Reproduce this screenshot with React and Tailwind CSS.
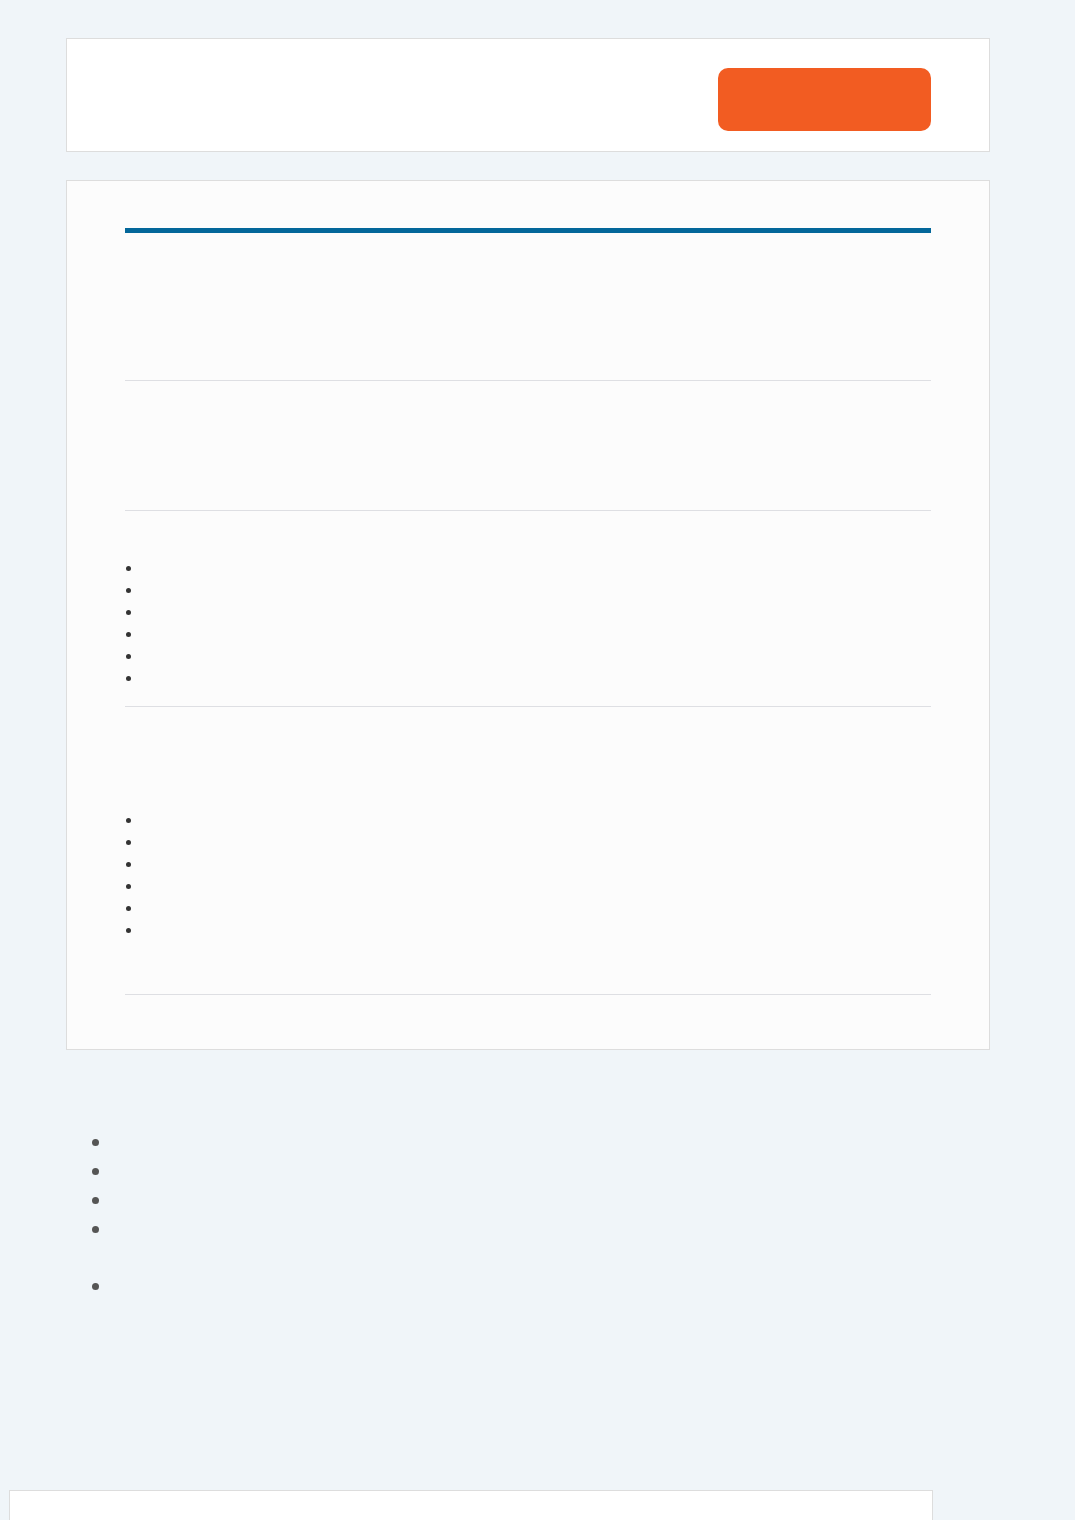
import React from "react";

const Dot = ({ className }) => (
  <span className={`inline-block rounded-full ${className}`} />
);

const CardList = () => (
  <ul className="flex flex-col">
    {[0, 1, 2, 3, 4, 5].map((i) => (
      <li key={i} className="h-[22px] flex items-center pl-[1px]">
        <Dot className="w-[5px] h-[5px] bg-[#333333]" />
      </li>
    ))}
  </ul>
);

const App = () => {
  const outer = [29, 29, 29, 58, 29];

  return (
    <div className="min-h-[1520px] bg-[#f0f5f9] overflow-hidden font-['Liberation_Sans',sans-serif]">
      <div className="ml-[66px] w-[924px] pt-[38px]">
        {/* header card */}
        <div className="h-[114px] bg-white border border-[#dddddd] flex justify-end items-start">
          <button className="mt-[29px] mr-[58px] w-[213px] h-[63px] rounded-[10px] bg-[#f25c22]" />
        </div>

        {/* main card */}
        <div className="mt-[28px] bg-[#fcfcfc] border border-[#dddddd] px-[58px] pt-[47px] pb-[54px]">
          <div className="h-[5px] bg-[#03679a]" />
          <div className="h-[147px]" />
          <hr className="border-0 h-px bg-[#dedfe3]" />
          <div className="h-[129px]" />
          <hr className="border-0 h-px bg-[#dedfe3]" />
          <div className="pt-[46px] pb-[17px]">
            <CardList />
          </div>
          <hr className="border-0 h-px bg-[#dedfe3]" />
          <div className="pt-[102px] pb-[53px]">
            <CardList />
          </div>
          <hr className="border-0 h-px bg-[#dedfe3]" />
        </div>
      </div>

      {/* list below */}
      <ul className="mt-[78px] pl-[92px] flex flex-col">
        {outer.map((h, i) => (
          <li key={i} className={i === 3 ? "h-[57px]" : "h-[29px]"}>
            <div className="h-[29px] flex items-center">
              <Dot className="w-[7px] h-[7px] bg-[#555555]" />
            </div>
          </li>
        ))}
      </ul>

      {/* footer card */}
      <div className="mt-[189px] ml-[9px] w-[924px] h-[60px] bg-white border border-[#dddddd]" />
    </div>
  );
};

export default App;
